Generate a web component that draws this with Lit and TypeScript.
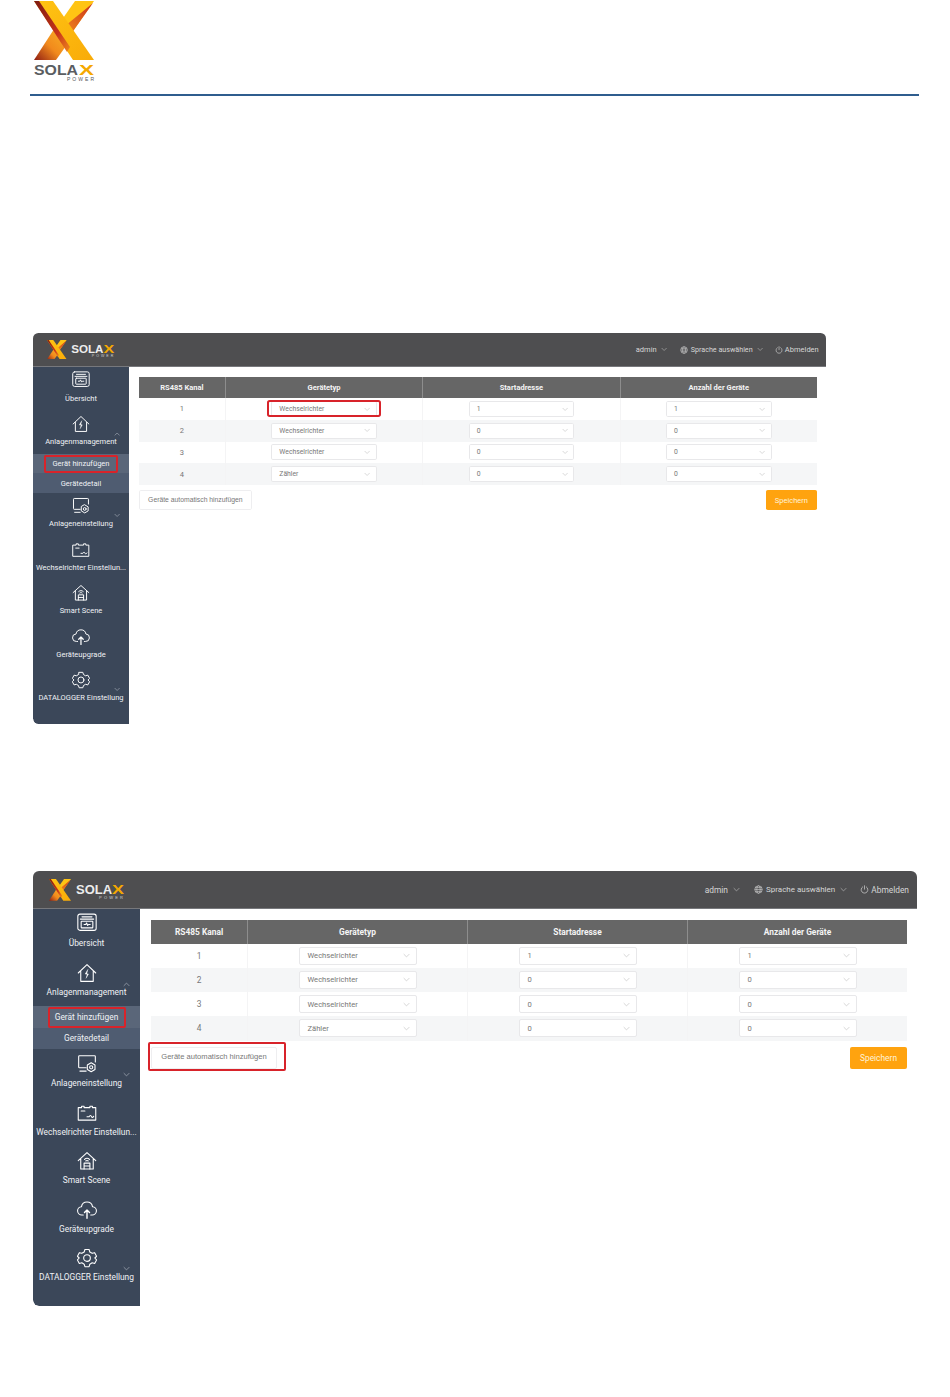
import { LitElement, html, css, svg, nothing } from "lit";
import { customElement, property } from "lit/decorators.js";
import { classMap } from "lit/directives/class-map.js";

const xMark = (id: string) => svg`
  <defs>
    <linearGradient id="${id}m" x1="0" y1="0" x2="1" y2="1">
      <stop offset="0" stop-color="#ffc414"/><stop offset="1" stop-color="#f9ab08"/>
    </linearGradient>
    <linearGradient id="${id}d" x1="0" y1="0" x2="1" y2="1">
      <stop offset="0" stop-color="#7c1a12"/><stop offset=".65" stop-color="#c8341a"/><stop offset="1" stop-color="#f08a1d"/>
    </linearGradient>
    <linearGradient id="${id}t" x1="1" y1="0" x2="0" y2="1">
      <stop offset="0" stop-color="#c9301a"/><stop offset="1" stop-color="#f28a1c"/>
    </linearGradient>
    <linearGradient id="${id}b" x1="1" y1="0" x2="0" y2="1">
      <stop offset="0" stop-color="#fbc02a"/><stop offset=".6" stop-color="#f28a1c"/><stop offset="1" stop-color="#8f1d14"/>
    </linearGradient>
  </defs>
  <polygon points="41,0 60,0 37,33 27,20" fill="#ffc414"/>
  <polygon points="59,2 37,33 31,25" fill="url(#${id}t)"/>
  <polygon points="0,59 22,59 37,38 24,22" fill="url(#${id}b)"/>
  <polygon points="0,0 19,0 60,59 39,59" fill="url(#${id}m)"/>
  <polygon points="0,0 5,0 36,46 33,51" fill="url(#${id}d)"/>`;

const ic = (body: unknown) => html`<svg class="ic" viewBox="0 0 24 24" fill="none" stroke="#fff" stroke-width="1.3" stroke-linejoin="round" stroke-linecap="round">${body}</svg>`;

const icons = {
  overview: ic(svg`<rect x="1" y="2.5" width="22" height="19.5" rx="2.5"/><path d="M6 5.8h12M4 8.5h16"/><rect x="5" y="11" width="14" height="8" rx=".8"/><path d="M8.5 15h2l1-1.8 1.3 3 1-1.2h2"/>`),
  plant: ic(svg`<path d="M1.5 12 12 2 22.5 12M4.5 10v12h15V10"/><path d="M13 8l-3 5.2h3.6L11 18" fill="#fff" stroke-width=".8"/>`),
  config: ic(svg`<path d="M11 16.5H3a1 1 0 0 1-1-1V3a1 1 0 0 1 1-1h18a1 1 0 0 1 1 1v6.5"/><path d="M3.5 20.5h7.5"/><path d="M17 10.5l4.6 2.7v5.4L17 21.3l-4.6-2.7v-5.4z"/><circle cx="17" cy="16" r="1.9"/>`),
  inverter: ic(svg`<path d="M1.5 5.5h4V3.8h3v1.7h7V3.8h3v1.7h4v15h-21z"/><path d="M5 9.5h4.5M12 16.5h2.5c1-2 2.2-2 3 0 .6 1.2 1.8 1 2.5-.5"/>`),
  smart: ic(svg`<path d="M1.5 11.5 12 2l10.5 9.5M4.5 9.5V21.5h15V9.5"/><path d="M8.5 21.5V14.5h7V21.5M8.5 18h7"/><path d="M9 10c1.8-1.6 4.2-1.6 6 0M10.5 12c.9-.7 2.1-.7 3 0"/>`),
  upgrade: ic(svg`<path d="M7.5 18H6a5 5 0 0 1-.6-10A6.7 6.7 0 0 1 18.6 8a5 5 0 0 1-.6 10h-1.5"/><path d="M12 22V12M9 15l3-3 3 3" stroke-width="1.7"/>`),
  gear: ic(svg`<path d="M9.5 1.8h5l.9 3 2.8 1.6 3-.8 2.3 4.3-2.1 2.1 2.1 2.3-2.3 4.3-3-.8-2.8 1.6-.9 3h-5l-.9-3-2.8-1.6-3 .8L.5 14.3l2.1-2.3-2.1-2.1 2.3-4.3 3 .8 2.8-1.6z"/><circle cx="12" cy="12" r="4"/>`),
};

const chev = (cls = "") => html`<svg class="chev ${cls}" viewBox="0 0 10 6" fill="none" stroke="currentColor" stroke-width="1"><path d="M1 1l4 4 4-4"/></svg>`;

@customElement("sx-panel")
class SxPanel extends LitElement {
  @property() mark = "";

  static styles = css`
    :host {
      display: block;
      width: 884px;
      height: 435px;
      font-family: Roboto, sans-serif;
      font-size: 8.4px;
    }
    :host([mark="select"]) { height: 436px; }
    .frame {
      display: flex;
      flex-direction: column;
      height: 100%;
      border-radius: 6px 6px 0 6px;
      overflow: hidden;
    }
    header {
      flex: 0 0 38px;
      display: flex;
      align-items: center;
      box-sizing: border-box;
      padding: 0 8px 0 16px;
      background: #4e4e50;
      color: #d6d6d6;
      border-bottom: 1px solid #77787c;
    }
    .brand {
      display: block;
      width: 76px;
      height: 22px;
    }
    .hright {
      margin-left: auto;
      display: flex;
      align-items: center;
    }
    .hitem {
      display: flex;
      align-items: center;
      gap: 3px;
    }
    .hitem.lang { margin-left: 14px; font-size: 8px; }
    .hitem.out { margin-left: 13px; gap: 2px; }
    .hitem svg.h { width: 9px; height: 9px; }
    .chev { width: 7px; height: 5px; color: #b5b5b5; margin-left: 2px; }
    .body { flex: 1; display: flex; min-height: 0; }
    nav {
      flex: 0 0 107px;
      width: 107px;
      background: #3b4759;
      color: #f0f2f5;
      border-radius: 0 0 0 6px;
    }
    .item {
      position: relative;
      box-sizing: border-box;
      height: 48.5px;
      padding-top: 5px;
      display: flex;
      flex-direction: column;
      align-items: center;
    }
    .item.first .ic { margin-top: -2px; margin-bottom: 2px; }
    .ic { width: 20px; height: 20px; display: block; flex: none; }
    .item .lbl {
      line-height: 19px;
      text-align: center;
      white-space: nowrap;
    }
    .item .chev {
      position: absolute;
      right: 10px;
      top: 23px;
      color: #a8afba;
      margin: 0;
    }
    .item .chev.up { top: 24px; transform: rotate(180deg); }
    .sub {
      height: 21.5px;
      display: flex;
      align-items: center;
      justify-content: center;
      background: #4f5c71;
      position: relative;
    }
    .sub.on { background: #5a6679; }
    .sub.on::after {
      content: "";
      position: absolute;
      left: 15px;
      right: 14px;
      top: 1px;
      bottom: 0;
      border: 2px solid #d8232a;
      border-radius: 2px;
    }
    :host([mark="select"]) .sub.on::after {
      left: 12px;
      right: 12px;
      border-width: 2.5px;
    }
    main {
      flex: 1;
      background: #fff;
      padding: 11px 11px 0 11px;
      min-width: 0;
    }
    .table {
      display: grid;
      grid-template-columns: 96px 220px 220px 220px;
      color: #777;
    }
    .th {
      height: 23.5px;
      background: #666;
      color: #f4f4f4;
      font-weight: 700;
      display: flex;
      align-items: center;
      justify-content: center;
      border-left: 1px solid #8d8d8d;
      box-sizing: border-box;
    }
    .th:first-child { border-left: 0; }
    .td {
      height: 24.25px;
      display: flex;
      align-items: center;
      justify-content: center;
      border-left: 1px solid #f4f4f5;
      box-sizing: border-box;
    }
    .td.c0 { border-left: 0; }
    .td.even { background: #f5f6f7; }
    .sel {
      position: relative;
      box-sizing: border-box;
      width: 118px;
      height: 18px;
      background: #fff;
      border: 1px solid #e8e8ea;
      border-radius: 2px;
      padding: 0 7px 0 8px;
      font-size: 7.6px;
      display: flex;
      align-items: center;
      justify-content: space-between;
    }
    .sel .chev { color: #c4c4c4; margin-right: -1px; }
    .sel.hl::after {
      content: "";
      position: absolute;
      inset: -2px -6px -1px -6px;
      border: 2.5px solid #d8232a;
      border-radius: 3px;
    }
    .foot {
      display: flex;
      justify-content: space-between;
      padding-top: 6px;
    }
    .btn {
      position: relative;
      box-sizing: border-box;
      height: 22px;
      display: flex;
      align-items: center;
      justify-content: center;
      border-radius: 2px;
    }
    .auto {
      width: 126px;
      border: 1px solid #eeeef0;
      color: #777;
      font-family: "Liberation Sans", sans-serif;
      font-size: 7.6px;
      padding-bottom: 2px;
    }
    .auto.hl::after {
      content: "";
      position: absolute;
      inset: -6px -10px -3px -4px;
      border: 2px solid #d8232a;
      border-radius: 2px;
    }
    .save {
      width: 57px;
      background: #ffa30f;
      color: #fff3d9;
      margin-right: -1px;
    }
  `;

  render() {
    const rows = [
      ["1", "Wechselrichter", "1", "1"],
      ["2", "Wechselrichter", "0", "0"],
      ["3", "Wechselrichter", "0", "0"],
      ["4", "Zähler", "0", "0"],
    ];
    const item = (icon: unknown, label: string, extra: unknown = nothing, first = false) =>
      html`<div class=${classMap({ item: true, first })}>${icon}<div class="lbl">${label}</div>${extra}</div>`;
    return html`<div class="frame">
      <header>
        <svg class="brand" viewBox="0 0 76 22">
          <svg x="0" y="0" width="22" height="22" viewBox="0 0 60 60" preserveAspectRatio="none">${xMark("h" + this.mark)}</svg>
          <text x="27" y="15" font-family="Liberation Sans" font-weight="700" font-size="12" fill="#ececec" textLength="36" lengthAdjust="spacingAndGlyphs">SOLA</text>
          <text x="63" y="15" font-family="Liberation Sans" font-weight="700" font-size="12" fill="#f5a800" textLength="12" lengthAdjust="spacingAndGlyphs">X</text>
          <text x="50" y="19.5" font-family="Liberation Sans" font-size="4" fill="#d0d0d0" textLength="24" lengthAdjust="spacing">POWER</text>
        </svg>
        <div class="hright">
          <div class="hitem">admin ${chev()}</div>
          <div class="hitem lang">
            <svg class="h" viewBox="0 0 12 12" fill="none" stroke="#d0d0d0" stroke-width=".8"><circle cx="6" cy="6" r="5"/><ellipse cx="6" cy="6" rx="2.3" ry="5"/><path d="M1 6h10M1.7 3.5h8.6M1.7 8.5h8.6"/></svg>
            Sprache auswählen ${chev()}
          </div>
          <div class="hitem out">
            <svg class="h" viewBox="0 0 12 12" fill="none" stroke="#d8d8d8" stroke-width=".9" stroke-linecap="round"><path d="M6 1v4.5M3.5 2.5a4.500 4.500 0 1 0 5 0"/></svg>
            Abmelden
          </div>
        </div>
      </header>
      <div class="body">
        <nav>
          ${item(icons.overview, "Übersicht", nothing, true)}
          ${item(icons.plant, "Anlagenmanagement", chev("up"))}
          <div class="sub on">Gerät hinzufügen</div>
          <div class="sub">Gerätedetail</div>
          ${item(icons.config, "Anlageneinstellung", chev())}
          ${item(icons.inverter, "Wechselrichter Einstellun...")}
          ${item(icons.smart, "Smart Scene")}
          ${item(icons.upgrade, "Geräteupgrade")}
          ${item(icons.gear, "DATALOGGER Einstellung", chev())}
        </nav>
        <main>
          <div class="table">
            <div class="th">RS485 Kanal</div>
            <div class="th">Gerätetyp</div>
            <div class="th">Startadresse</div>
            <div class="th">Anzahl der Geräte</div>
            ${rows.map((r, i) => {
              const even = i % 2 === 1;
              return html`
                <div class=${classMap({ td: true, c0: true, even })}>${r[0]}</div>
                ${r.slice(1).map(
                  (v, c) => html`<div class=${classMap({ td: true, even })}>
                    <div class=${classMap({ sel: true, hl: this.mark === "select" && i === 0 && c === 0 })}>
                      <span>${v}</span>${chev()}
                    </div>
                  </div>`
                )}`;
            })}
          </div>
          <div class="foot">
            <div class=${classMap({ btn: true, auto: true, hl: this.mark === "auto" })}>Geräte automatisch hinzufügen</div>
            <div class="btn save">Speichern</div>
          </div>
        </main>
      </div>
    </div>`;
  }
}

@customElement("app-root")
export class AppRoot extends LitElement {
  static styles = css`
    :host {
      display: block;
      width: 950px;
      height: 1397px;
      background: #fff;
      overflow: hidden;
    }
    .top { padding: 1px 0 0 34px; height: 94px; box-sizing: border-box; }
    .logo { display: block; width: 62px; height: 82px; }
    .rule { height: 2px; margin: 0 31px 0 30px; background: #2f5d8e; }
    .p1 { margin: 237px 0 0 33px; width: 793px; height: 391px; }
    .p1 sx-panel { zoom: 0.897; }
    .p2 { margin: 147px 0 0 33px; }
  `;
  render() {
    return html`
      <div class="top">
        <svg class="logo" viewBox="0 0 62 82">
          <svg x="0" y="0" width="60" height="60" viewBox="0 0 60 60">${xMark("top")}</svg>
          <text x="0" y="74" font-family="Liberation Sans" font-weight="700" font-size="14" fill="#5a5d61" textLength="44" lengthAdjust="spacingAndGlyphs">SOLA</text>
          <text x="45" y="74" font-family="Liberation Sans" font-weight="700" font-size="14" fill="#f5a800" textLength="15" lengthAdjust="spacingAndGlyphs">X</text>
          <text x="33" y="80" font-family="Liberation Sans" font-size="5" fill="#55585c" textLength="27" lengthAdjust="spacing">POWER</text>
        </svg>
      </div>
      <div class="rule"></div>
      <div class="p1"><sx-panel mark="select"></sx-panel></div>
      <div class="p2"><sx-panel mark="auto"></sx-panel></div>
    `;
  }
}
